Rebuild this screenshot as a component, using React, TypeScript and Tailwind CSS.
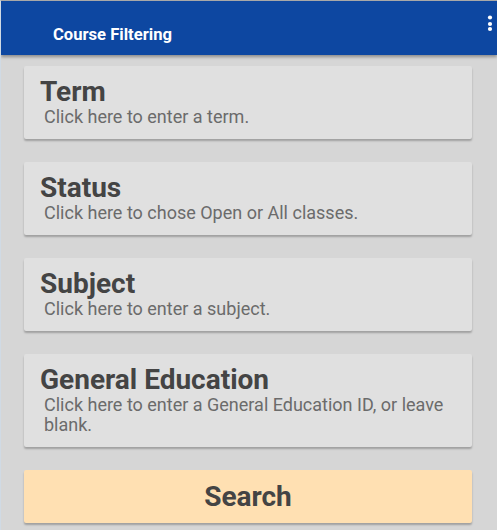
import React from "react";

const items = [
  { title: "Term", sub: "Click here to enter a term." },
  { title: "Status", sub: "Click here to chose Open or All classes." },
  { title: "Subject", sub: "Click here to enter a subject." },
  { title: "General Education", sub: "Click here to enter a General Education ID, or leave blank." },
];

export default function App() {
  return (
    <div
      className="w-[497px] h-[530px] overflow-hidden bg-[#d6d6d6] border-t border-[#a8a8a8] border-l border-l-[#d0dae4] flex flex-col"
      style={{ fontFamily: "Roboto, 'Liberation Sans', sans-serif" }}
    >
      <div className="relative h-[54px] shrink-0 bg-[#0d47a1] shadow-[0_2px_3px_rgba(0,0,0,0.35)] pt-[24px] pl-[52px]">
        <div className="text-white font-bold text-[16.6px] leading-[20px]">Course Filtering</div>
        <svg className="absolute right-[4px] top-[13px]" width="6" height="20" viewBox="0 0 6 20">
          <circle cx="3" cy="3.5" r="2.1" fill="white" />
          <circle cx="3" cy="10" r="2.1" fill="white" />
          <circle cx="3" cy="15" r="2.1" fill="white" />
        </svg>
      </div>
      <div className="flex flex-col gap-[23px] pt-[11px] pl-[23px]">
        {items.map((it) => (
          <div
            key={it.title}
            className="w-[448px] bg-[#e0e0e0] rounded-[2px] shadow-[0_2px_2px_rgba(0,0,0,0.25)] pt-[10px] pb-[12px] pl-[16px] pr-[16px]"
          >
            <div className="text-[28px] leading-[31px] font-bold text-[#444444]">{it.title}</div>
            <div className="text-[18px] leading-[20px] text-[#6b6b6b] ml-[4px]">{it.sub}</div>
          </div>
        ))}
        <div className="w-[448px] h-[53px] bg-[#ffe0b2] rounded-[2px] shadow-[0_2px_2px_rgba(0,0,0,0.25)] flex items-center justify-center">
          <span className="text-[28px] font-bold text-[#444444] leading-none">Search</span>
        </div>
      </div>
    </div>
  );
}
